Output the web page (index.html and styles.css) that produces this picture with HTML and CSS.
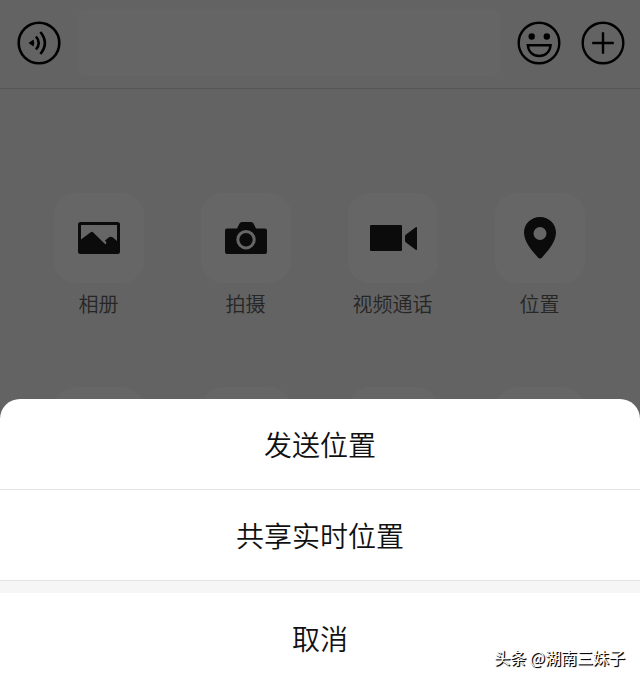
FILE: index.html
```html
<!DOCTYPE html>
<html lang="zh-CN">
<head>
    <meta charset="utf-8">
    <meta name="viewport" content="width=device-width, initial-scale=1">
    <title>发送位置</title>
    <link rel="stylesheet" href="styles.css">
</head>
<body>
<div class="chat">
    <form class="composer">
        <button type="button" class="icon-button" aria-label="语音">
            <svg viewBox="0 0 44 44" fill="none" stroke="#000" stroke-width="2.6">
                <circle cx="22" cy="22" r="20.3"/>
                <path d="M11.500 22L16.500 18.500Q18 22 16.500 25.500Z" fill="#000" stroke="none"/>
                <path d="M19 15.500Q24.500 22 19 28.500M23.400 11Q32.400 22 23.400 33" stroke-width="2.6"/>
            </svg>
        </button>
        <input class="message" type="text" aria-label="消息">
        <div class="composer-actions">
            <button type="button" class="icon-button" aria-label="表情">
                <svg viewBox="0 0 44 44" fill="none" stroke="#000" stroke-width="2.4">
                    <circle cx="22" cy="22" r="20.3"/>
                    <circle cx="14.7" cy="15.5" r="3.2" fill="#000" stroke="none"/>
                    <circle cx="29.8" cy="15.5" r="3.2" fill="#000" stroke="none"/>
                    <path d="M10.8 24.2H33.6C33 31 28.4 35 22.2 35S11.4 31 10.8 24.2Z"/>
                </svg>
            </button>
            <button type="button" class="icon-button" aria-label="更多">
                <svg viewBox="0 0 44 44" fill="none" stroke="#000" stroke-width="2.4">
                    <circle cx="22" cy="22" r="20.3"/>
                    <path d="M22 11.2V32.8M11.2 22H32.8"/>
                </svg>
            </button>
        </div>
    </form>
    <div class="tools">
        <button type="button" class="tool">
            <span class="tile">
                <svg viewBox="0 0 48 48" fill="#1c1c1c">
                    <path fill-rule="evenodd" d="M5.5 8H42.500Q45 8 45 10.500V37.500Q45 40 42.500 40H5.500Q3 40 3 37.500V10.500Q3 8 5.500 8ZM6 11V25.500L16 18Q17 17.500 18 18.300L30.500 30.500L31.500 28.500L30 26.500L34 23.300Q36 22 38 23.500L42 27V11Z"/>
                </svg>
            </span>
            <span class="tool-name">相册</span>
        </button>
        <button type="button" class="tool">
            <span class="tile">
                <svg viewBox="0 0 48 48" fill="#1c1c1c">
                    <path fill-rule="evenodd" d="M5 14.500H15L17.500 9.500Q18.200 8 20 8H29Q30.800 8 31.500 9.500L34 14.500H43Q45 14.500 45 16.500V38Q45 40 43 40H5Q3 40 3 38V16.500Q3 14.500 5 14.500ZM24 16A9.700 9.700 0 1 0 24 35.400A9.700 9.700 0 1 0 24 16ZM24 19A6.700 6.700 0 1 1 24 32.400A6.700 6.700 0 1 1 24 19Z"/>
                </svg>
            </span>
            <span class="tool-name">拍摄</span>
        </button>
        <button type="button" class="tool">
            <span class="tile">
                <svg viewBox="0 0 48 48" fill="#1c1c1c">
                    <rect x="1" y="11" width="32" height="26" rx="1"/>
                    <path d="M47 13Q48 12.500 48 14V35Q48 36.500 47 36L37 28.500Q36 27.800 36 26.500V22.500Q36 21.200 37 20.500Z"/>
                </svg>
            </span>
            <span class="tool-name">视频通话</span>
        </button>
        <button type="button" class="tool">
            <span class="tile">
                <svg viewBox="0 0 48 48" fill="#1c1c1c">
                    <path fill-rule="evenodd" d="M24 3C33 3 40 10 40 18.500C40 28 32 36.500 26.500 43Q24 46 21.500 43C16 36.500 8 28 8 18.500C8 10 15 3 24 3ZM24 13A6.500 6.500 0 1 0 24 26A6.500 6.500 0 1 0 24 13Z"/>
                </svg>
            </span>
            <span class="tool-name">位置</span>
        </button>
        <span class="tile"></span>
        <span class="tile"></span>
        <span class="tile"></span>
        <span class="tile"></span>
    </div>
</div>

<div class="scrim">
    <div class="sheet" role="dialog" aria-label="位置">
        <button type="button" class="option">发送位置</button>
        <button type="button" class="option">共享实时位置</button>
        <button type="button" class="option cancel">取消</button>
    </div>
    <span class="credit">头条 @湖南三妹子</span>
</div>
</body>
</html>
```
FILE: styles.css
```css
* {
  box-sizing: border-box;
}
body {
  margin: 0;
  height: 100vh;
  overflow: hidden;
  font-family: "Noto Sans CJK SC", sans-serif;
  background: #f7f7f7;
}
button {
  margin: 0;
  padding: 0;
  border: none;
  background: none;
  font-family: inherit;
  font-weight: 350;
}
.composer {
  display: flex;
  align-items: center;
  gap: 17px;
  padding: 9px 15px 12px 17px;
  border-bottom: 1px solid #d5d5d5;
}
.icon-button,
.icon-button svg {
  display: block;
  width: 44px;
  height: 44px;
}
.message {
  flex: 1;
  min-width: 0;
  height: 67px;
  padding: 0 16px;
  border: none;
  border-radius: 8px;
  background: #fcfcfc;
  font-size: 28px;
}
.composer-actions {
  display: flex;
  gap: 20px;
}
.tools {
  display: grid;
  grid-template-columns: repeat(4, 1fr);
  justify-items: center;
  row-gap: 69px;
  padding: 104px 27px 0 25px;
}
.tool {
  display: flex;
  flex-direction: column;
  align-items: center;
  gap: 7px;
}
.tile {
  display: flex;
  align-items: center;
  justify-content: center;
  width: 90px;
  height: 90px;
  border-radius: 22px;
  background: #fff;
}
.tile svg {
  width: 48px;
  height: 48px;
}
.tool-name {
  font-size: 20px;
  line-height: 28px;
  color: #606060;
}
.scrim {
  position: absolute;
  inset: 0;
  display: flex;
  flex-direction: column;
  justify-content: flex-end;
  background: rgba(0, 0, 0, 0.6);
}
.sheet {
  display: flex;
  flex-direction: column;
  border-radius: 20px 20px 0 0;
  background: #fff;
  overflow: hidden;
}
.option {
  padding: 25px 0;
  border-bottom: 1px solid #e3e3e3;
  font-size: 28px;
  line-height: 40px;
  color: #111;
}
.cancel {
  padding-bottom: 22px;
  border-top: 12px solid #f6f6f6;
  border-bottom: none;
}
.credit {
  position: absolute;
  right: 15px;
  bottom: 11px;
  font-size: 16px;
  line-height: 24px;
  color: #fff;
  text-shadow: 1px 1px 1px #000, 1px 1px 0 #333;
}
```
